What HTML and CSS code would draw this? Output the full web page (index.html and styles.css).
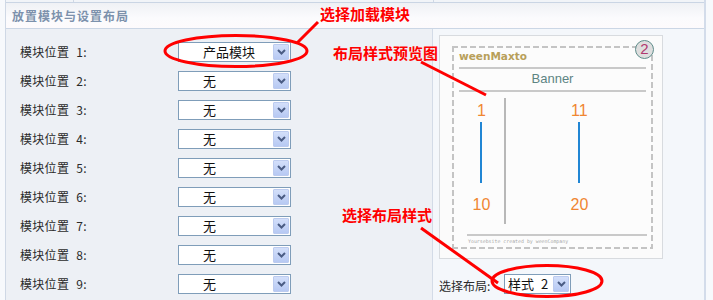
FILE: index.html
```html
<!DOCTYPE html>
<html lang="zh-CN">
<head>
<meta charset="utf-8">
<title>放置模块与设置布局</title>
<link rel="stylesheet" href="styles.css">
</head>
<body>
<div class="page">
  <div class="frame">
    <div class="topstrip"><span class="ts ts-a"></span><span class="ts ts-b"></span><span class="ts ts-c"></span></div>
    <div class="header">放置模块与设置布局</div>
    <div class="body">
      <div class="left">
        <div class="row"><span class="label">模块位置 1:</span><div class="sel"><span class="val">产品模块</span><span class="btn"><svg width="9" height="6" viewBox="0 0 9 6"><path d="M1 1 L4.5 4.5 L8 1" fill="none" stroke="#4a5c84" stroke-width="2"/></svg></span></div></div>
        <div class="row"><span class="label">模块位置 2:</span><div class="sel"><span class="val">无</span><span class="btn"><svg width="9" height="6" viewBox="0 0 9 6"><path d="M1 1 L4.5 4.5 L8 1" fill="none" stroke="#4a5c84" stroke-width="2"/></svg></span></div></div>
        <div class="row"><span class="label">模块位置 3:</span><div class="sel"><span class="val">无</span><span class="btn"><svg width="9" height="6" viewBox="0 0 9 6"><path d="M1 1 L4.5 4.5 L8 1" fill="none" stroke="#4a5c84" stroke-width="2"/></svg></span></div></div>
        <div class="row"><span class="label">模块位置 4:</span><div class="sel"><span class="val">无</span><span class="btn"><svg width="9" height="6" viewBox="0 0 9 6"><path d="M1 1 L4.5 4.5 L8 1" fill="none" stroke="#4a5c84" stroke-width="2"/></svg></span></div></div>
        <div class="row"><span class="label">模块位置 5:</span><div class="sel"><span class="val">无</span><span class="btn"><svg width="9" height="6" viewBox="0 0 9 6"><path d="M1 1 L4.5 4.5 L8 1" fill="none" stroke="#4a5c84" stroke-width="2"/></svg></span></div></div>
        <div class="row"><span class="label">模块位置 6:</span><div class="sel"><span class="val">无</span><span class="btn"><svg width="9" height="6" viewBox="0 0 9 6"><path d="M1 1 L4.5 4.5 L8 1" fill="none" stroke="#4a5c84" stroke-width="2"/></svg></span></div></div>
        <div class="row"><span class="label">模块位置 7:</span><div class="sel"><span class="val">无</span><span class="btn"><svg width="9" height="6" viewBox="0 0 9 6"><path d="M1 1 L4.5 4.5 L8 1" fill="none" stroke="#4a5c84" stroke-width="2"/></svg></span></div></div>
        <div class="row"><span class="label">模块位置 8:</span><div class="sel"><span class="val">无</span><span class="btn"><svg width="9" height="6" viewBox="0 0 9 6"><path d="M1 1 L4.5 4.5 L8 1" fill="none" stroke="#4a5c84" stroke-width="2"/></svg></span></div></div>
        <div class="row"><span class="label">模块位置 9:</span><div class="sel"><span class="val">无</span><span class="btn"><svg width="9" height="6" viewBox="0 0 9 6"><path d="M1 1 L4.5 4.5 L8 1" fill="none" stroke="#4a5c84" stroke-width="2"/></svg></span></div></div>
      </div>
      <div class="right">
        <div class="preview">
          <div class="dash">
            <span class="badge">2</span>
            <div class="brand">weenMaxto</div>
            <div class="rule r1"></div>
            <div class="banner">Banner</div>
            <div class="rule r2"></div>
            <div class="cols">
              <div class="col col-a"><span class="num">1</span><span class="bar"></span><span class="num num-b">10</span></div>
              <div class="vdiv"></div>
              <div class="col col-b"><span class="num">11</span><span class="bar"></span><span class="num num-b">20</span></div>
            </div>
            <div class="rule r3"></div>
            <div class="credit">Yoursebsite created by weenCompany</div>
          </div>
        </div>
        <div class="choose">
          <span class="choose-label">选择布局:</span>
          <div class="sel sel-small"><span class="val">样式 2</span><span class="btn"><svg width="9" height="6" viewBox="0 0 9 6"><path d="M1 1 L4.5 4.5 L8 1" fill="none" stroke="#4a5c84" stroke-width="2"/></svg></span></div>
        </div>
      </div>
    </div>
  </div>

  <div class="annot">
    <svg class="marks" width="713" height="300" viewBox="0 0 713 300">
      <ellipse cx="236" cy="51" rx="71" ry="15.5" fill="none" stroke="#ff0000" stroke-width="3"/>
      <line x1="297" y1="43" x2="318" y2="22" stroke="#ff0000" stroke-width="3"/>
      <line x1="421" y1="62" x2="486" y2="95" stroke="#ff0000" stroke-width="3"/>
      <line x1="421" y1="228" x2="498" y2="283" stroke="#ff0000" stroke-width="3"/>
      <ellipse cx="547" cy="281" rx="55" ry="15.5" fill="none" stroke="#ff0000" stroke-width="3"/>
    </svg>
    <span class="note note-1">选择加载模块</span>
    <span class="note note-2">布局样式预览图</span>
    <span class="note note-3">选择布局样式</span>
  </div>
</div>
</body>
</html>
```

FILE: styles.css
```css
html, body {
  margin: 0;
  padding: 0;
  background: #f7f9fc;
}

.page {
  position: relative;
  width: 713px;
  height: 300px;
  overflow: hidden;
  font-family: "Noto Sans CJK SC", "Liberation Sans", sans-serif;
  font-size: 12px;
  color: #222;
}

.frame {
  margin-left: 5px;
  width: 698px;
  height: 300px;
  border-left: 1px solid #cfd8e5;
  border-right: 2px solid #d3dcea;
  background: #edf0f5;
}

.topstrip {
  display: flex;
  height: 2px;
  border-bottom: 1px solid #cad5e4;
  background: #f1f4f8;
}
.ts { display: block; height: 2px; }
.ts-a { width: 67px; border-right: 1px solid #cfd8e5; }
.ts-b { width: 359px; border-right: 1px solid #cfd8e5; }
.ts-c { flex: 1; }

.header {
  height: 25px;
  line-height: 25px;
  padding-left: 6px;
  border-bottom: 1px solid #cbd6e5;
  background: linear-gradient(#eff1f5, #fbfbfd 60%, #fdfafc);
  font-weight: bold;
  font-size: 12px;
  letter-spacing: 1px;
  color: #7c91ac;
}

.body {
  display: grid;
  grid-template-columns: 427px 1fr;
  height: 271px;
}

.left {
  padding: 8px 0 0 14px;
  border-right: 1px solid #d3dbe7;
}

.row {
  display: flex;
  align-items: center;
  height: 29px;
}

.label {
  width: 158px;
  font-size: 12px;
  line-height: 14px;
  word-spacing: 4px;
  letter-spacing: 0.3px;
  color: #2a2a2a;
}

.sel {
  position: relative;
  box-sizing: border-box;
  width: 113px;
  height: 20px;
  border: 1px solid #7f9db9;
  background: #fff;
  display: flex;
  align-items: center;
}

.val {
  padding-left: 24px;
  font-size: 13px;
  line-height: 18px;
  word-spacing: 4px;
  color: #111;
}

.btn {
  position: absolute;
  top: 1px;
  right: 1px;
  width: 16px;
  height: 16px;
  box-sizing: border-box;
  border: 1px solid #bccbef;
  border-radius: 1px;
  background: linear-gradient(#d3dffa, #b7c9f3);
  display: flex;
  align-items: center;
  justify-content: center;
}
.btn svg { display: block; }

.right {
  padding: 6px 0 0 6px;
  background: #f4f7fb;
}

.preview {
  box-sizing: border-box;
  width: 224px;
  height: 224px;
  border: 1px solid #d8dbdf;
  background: #fbfbfb;
  padding: 10px 0 0 12px;
}

.dash {
  position: relative;
  box-sizing: border-box;
  width: 201px;
  height: 203px;
  padding: 4px 0 0 7px;
  background:
    repeating-linear-gradient(90deg, #c4c4c4 0 6px, transparent 6px 9px) left top / 100% 2px no-repeat,
    repeating-linear-gradient(90deg, #c4c4c4 0 6px, transparent 6px 9px) left bottom / 100% 2px no-repeat,
    repeating-linear-gradient(180deg, #c4c4c4 0 6px, transparent 6px 9px) left top / 2px 100% no-repeat,
    repeating-linear-gradient(180deg, #c4c4c4 0 6px, transparent 6px 9px) right top / 2px 100% no-repeat,
    #fcfcfc;
}

.badge {
  position: absolute;
  left: 183px;
  top: -6px;
  width: 19px;
  height: 19px;
  box-sizing: border-box;
  border: 1.5px solid #5f8d8b;
  border-radius: 50%;
  background: #dedede;
  font-family: "Liberation Sans", sans-serif;
  font-size: 15px;
  line-height: 16px;
  text-align: center;
  color: #b0386f;
}

.brand {
  height: 12px;
  line-height: 12px;
  font-family: "DejaVu Sans", sans-serif;
  font-weight: bold;
  font-size: 10.5px;
  color: #b8a05a;
}

.rule {
  height: 2px;
  background: #c9c9c9;
}
.r1 { width: 187px; margin-top: 5px; }
.r2 { width: 187px; margin-top: 4px; }
.r3 { width: 180px; margin-top: 9px; margin-left: 8px; }

.banner {
  width: 187px;
  margin-top: 2px;
  height: 15px;
  line-height: 15px;
  text-align: center;
  font-family: "Liberation Sans", sans-serif;
  font-size: 13px;
  color: #5c8483;
}

.cols {
  display: flex;
  height: 133px;
}

.col {
  display: flex;
  flex-direction: column;
  align-items: center;
}
.col-a { width: 47px; }
.col-b { width: 154px; }

.num {
  margin-top: 11px;
  height: 16px;
  line-height: 16px;
  font-family: "Liberation Sans", sans-serif;
  font-size: 16px;
  color: #f08632;
}
.num-b { margin-top: 14px; }

.bar {
  display: block;
  width: 2px;
  height: 61px;
  margin-top: 3px;
  background: #2186d4;
}

.vdiv {
  width: 2px;
  height: 126px;
  margin-top: 6px;
  background: #b8b8b8;
}

.credit {
  margin-top: 2px;
  margin-left: 9px;
  height: 6px;
  line-height: 6px;
  font-family: "DejaVu Sans Mono", monospace;
  font-size: 4.9px;
  color: #aaa;
}

.choose {
  display: flex;
  align-items: center;
  margin-top: 15px;
  height: 20px;
}

.choose-label {
  width: 65px;
  padding-top: 4px;
  font-size: 12px;
  line-height: 14px;
  color: #2a2a2a;
}

.sel-small { width: 67px; }
.sel-small .val { padding-left: 3px; }

.annot {
  position: absolute;
  left: 0;
  top: 0;
  width: 713px;
  height: 300px;
  pointer-events: none;
}

.marks {
  position: absolute;
  left: 0;
  top: 0;
}

.note {
  position: absolute;
  font-family: "Noto Sans CJK SC", sans-serif;
  font-weight: bold;
  font-size: 15px;
  line-height: 15px;
  color: #ff0000;
  white-space: nowrap;
}
.note-1 { left: 320px; top: 6px; }
.note-2 { left: 333px; top: 45px; }
.note-3 { left: 342px; top: 207px; }
```
